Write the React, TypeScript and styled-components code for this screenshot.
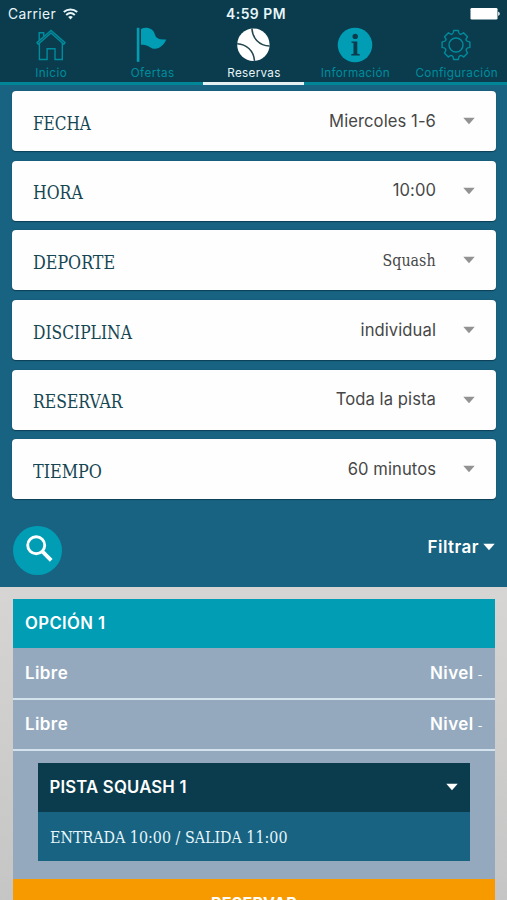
import React from "react";
import styled, { createGlobalStyle } from "styled-components";

const GlobalStyle = createGlobalStyle`
  * { box-sizing: border-box; }
  html, body { margin: 0; height: 900px; overflow: hidden; }
  body { font-family: Inter, "Liberation Sans", sans-serif; }
`;

const Screen = styled.div`
  width: 507px;
  height: 900px;
  overflow: hidden;
  display: flex;
  flex-direction: column;
  background: #d4d4d4;
`;

const Header = styled.header`
  flex: none;
  height: 85.4px;
  background: #0a3c4d;
`;

const StatusBar = styled.div`
  height: 27px;
  display: grid;
  grid-template-columns: 1fr auto 1fr;
  align-items: center;
  padding: 0 6px 0 8px;
  color: #e8f6fa;
`;

const Carrier = styled.div`
  display: flex;
  align-items: center;
  gap: 7px;
  font-size: 13.8px;
  letter-spacing: 0.4px;
`;

const Clock = styled.div`
  font-size: 13.9px;
  font-weight: 600;
  letter-spacing: 0.5px;
  padding-left: 3px;
`;

const Battery = styled.svg`
  justify-self: end;
  display: block;
`;

const Tabs = styled.nav`
  display: grid;
  grid-template-columns: repeat(5, 101.4px);
  height: 58.4px;
`;

const Tab = styled.a<{ $active?: boolean }>`
  display: flex;
  flex-direction: column;
  align-items: center;
  color: ${(p) => (p.$active ? "#e6f4f7" : "#008c9d")};
  border-bottom: 3px solid ${(p) => (p.$active ? "#e6f1f3" : "#008696")};
  svg { display: block; flex: none; }
`;

const TabLabel = styled.span<{ $spacing?: number }>`
  margin-top: 2px;
  padding-left: 1px;
  font-size: 11.7px;
  line-height: 16px;
  letter-spacing: ${(p) => p.$spacing ?? 0.3}px;
  white-space: nowrap;
`;

const SearchPanel = styled.section`
  flex: none;
  height: 502px;
  padding: 5.9px 11px 0 12px;
  background: #186381;
`;

const Fields = styled.div`
  display: grid;
  grid-auto-rows: 60px;
  row-gap: 9.6px;
`;

const Field = styled.div`
  display: flex;
  align-items: center;
  padding: 0 21px;
  border-radius: 4px;
  background: #fefefe;
  box-shadow: 0 0.5px 1px rgba(5, 45, 65, 0.65);
`;

const FieldLabel = styled.span<{ $fit: number }>`
  flex: 1;
  padding-top: 5px;
  color: #164653;
  font: 18.8px/24px "DejaVu Serif Condensed", "DejaVu Serif", serif;
  font-stretch: condensed;
  transform: scaleX(${(p) => p.$fit});
  transform-origin: left;
`;

const FieldValue = styled.span<{ $serif?: boolean }>`
  margin-right: 27px;
  padding-bottom: ${(p) => (p.$serif ? 0 : 1)}px;
  color: #474747;
  font-family: ${(p) => (p.$serif ? '"DejaVu Serif", serif' : 'Inter, sans-serif')};
  font-size: ${(p) => (p.$serif ? 16 : 16.6)}px;
  letter-spacing: ${(p) => (p.$serif ? 0 : 0.08)}px;
  transform: ${(p) => (p.$serif ? "scaleX(0.89)" : "none")};
  transform-origin: right;
`;

const Actions = styled.div`
  display: flex;
  justify-content: space-between;
  padding: 27px 1px 0 1px;
`;

const SearchButton = styled.button`
  width: 49px;
  height: 49px;
  padding: 0;
  border: 0;
  border-radius: 50%;
  background: #009db5;
  svg { display: block; }
`;

const Filter = styled.div`
  display: flex;
  align-items: center;
  gap: 4px;
  height: 42px;
  color: #fff;
  font-size: 17px;
  font-weight: 600;
  letter-spacing: 0.45px;
`;

const Results = styled.main`
  flex: 1;
  padding: 11.8px 12px 0 13px;
  background: linear-gradient(#d6d5d3, #c4c4c4);
`;

const Option = styled.section`
  display: flex;
  flex-direction: column;
  background: #94a9bd;
  color: #fff;
`;

const Title = styled.h2<{ $dark?: boolean }>`
  display: flex;
  align-items: center;
  justify-content: space-between;
  height: 49px;
  margin: 0;
  padding: 0 12px 1px;
  background: ${(p) => (p.$dark ? "#0a3c4d" : "#009db5")};
  font-size: 16.7px;
  font-weight: 600;
  letter-spacing: ${(p) => (p.$dark ? 0.2 : 0.4)}px;
`;

const PlayerRow = styled.div`
  display: flex;
  justify-content: space-between;
  align-items: center;
  height: 51.4px;
  padding: 0 12px;
  border-bottom: 2px solid #d3e2ec;
  font-size: 17px;
  font-weight: 600;
  letter-spacing: 0.4px;
`;

const Dash = styled.span`
  font-size: 11px;
  font-weight: 400;
  margin-left: 4px;
`;

const Court = styled.section`
  margin: 12px 25px 18px 24.5px;
  background: #186381;
`;

const Schedule = styled.div`
  height: 49px;
  padding: 0 12.5px;
  color: #e5f6fc;
  font: 16.4px/51px "DejaVu Serif Condensed", "DejaVu Serif", serif;
  font-stretch: condensed;
  white-space: nowrap;
  transform: scaleX(0.968);
  transform-origin: left;
`;

const ReserveButton = styled.button`
  height: 50px;
  padding: 0;
  border: 0;
  background: #f69a00;
  color: #fff;
  font: 700 16px/49px Inter, sans-serif;
  letter-spacing: 0.3px;
`;

const Caret = ({ color = "#fff" }: { color?: string }) => (
  <svg width="12" height="8" viewBox="0 0 12 8">
    <path d="M.3.7h11.4L6 7.3z" fill={color} />
  </svg>
);

const HomeIcon = () => (
  <svg width="36" height="36" viewBox="0 0 36 36" fill="none" stroke="currentColor" strokeWidth="1.4">
    <path d="M6.4 16v16.5h7.7V21.8H22v10.7h7.3V16" />
    <path d="M4 15.6 18 3.5l14 12.1-1.2 1.7L18 6 5.2 17.3z" />
    <path d="M6.2 13.2V5.7h4.5v3.4" />
  </svg>
);

const FlagIcon = () => (
  <svg width="36" height="36" viewBox="0 0 36 36" fill="#009db5">
    <path d="M2.8.8h2.6v34H2.8z" />
    <path d="M7 2c3.6-1.7 7.3-1.6 10.7.5 3.3 2.1 2.6 6.5 5.7 8.6 2.4 1.7 5.5 1.5 8.8 1.3-1.8 4.6-6.1 9.2-11.2 9.3-5.2 0-7-5-14-3.9z" />
  </svg>
);

const BallIcon = () => (
  <svg width="36" height="36" viewBox="0 0 36 36" fill="none">
    <circle cx="18.4" cy="17.7" r="16.2" fill="#fff" />
    <g stroke="#23454d" strokeWidth="1.5">
      <path d="M2.2 16.8C11 17.3 18.8 23 19.5 33.9M16.9 1.6C17.5 11 24 18.7 34.6 19" />
    </g>
  </svg>
);

const InfoIcon = () => (
  <svg width="36" height="36" viewBox="0 0 36 36">
    <circle cx="18" cy="18" r="17.3" fill="#009db5" />
    <circle cx="18.2" cy="9.4" r="2.7" fill="#0a3c4d" />
    <path d="M14.5 14.4h5.8v12.4l2.5.5v1.2h-8.6v-1.2l2.3-.5V16.1l-2-.4z" fill="#0a3c4d" />
  </svg>
);

const GearIcon = () => (
  <svg width="36" height="36" viewBox="0 0 36 36" fill="none" stroke="currentColor" strokeWidth="1.4">
    <circle cx="18" cy="18" r="7" />
    <path d="M15.7 3.5h4.6c.3 4 2.2 4.8 5.2 2.3l4 4c-2.5 3-2 4.6 2.4 5.1v5.5c-4.1.6-4.9 2.5-2.3 5.6l-3.9 3.9c-3-2.5-4.9-1.8-5.4 2.6h-4.6c-.5-4.4-2.4-5.1-5.4-2.6L6.4 26c2.6-3.1 1.8-5-2.3-5.6v-5.5c4.4-.5 4.9-2.1 2.4-5.1l4-4c3 2.5 4.9 1.7 5.2-2.3Z" strokeLinejoin="round" />
  </svg>
);

const tabs = [
  { name: "Inicio", icon: <HomeIcon />, spacing: 0.45 },
  { name: "Ofertas", icon: <FlagIcon />, spacing: 0.4 },
  { name: "Reservas", icon: <BallIcon />, spacing: 0.3, active: true },
  { name: "Información", icon: <InfoIcon />, spacing: 0.3 },
  { name: "Configuración", icon: <GearIcon />, spacing: 0.35 },
];

const fields = [
  { label: "FECHA", value: "Miercoles 1-6", fit: 0.906 },
  { label: "HORA", value: "10:00", fit: 0.93 },
  { label: "DEPORTE", value: "Squash", fit: 0.942, serif: true },
  { label: "DISCIPLINA", value: "individual", fit: 0.918 },
  { label: "RESERVAR", value: "Toda la pista", fit: 0.925 },
  { label: "TIEMPO", value: "60 minutos", fit: 0.947 },
];

export default function App() {
  return (
    <>
      <GlobalStyle />
      <Screen>
        <Header>
          <StatusBar>
            <Carrier>
              Carrier
              <svg width="15" height="12" viewBox="0 0 15 12" fill="none" stroke="#e8f6fa" strokeWidth="2">
                <path d="M.8 4.1c3.9-3.6 9.5-3.6 13.4 0M3.2 6.9c2.6-2.2 6-2.2 8.6 0" />
                <path d="m7.5 11.4-2.3-2.5c1.3-1.2 3.3-1.2 4.6 0z" fill="#e8f6fa" stroke="none" />
              </svg>
            </Carrier>
            <Clock>4:59 PM</Clock>
            <Battery width="31" height="12" viewBox="0 0 31 12" fill="#fff">
              <rect x="0.5" y="0" width="27" height="11.5" rx="1.3" />
              <path d="M28.2 3.8c2 .5 2 3.5 0 4z" />
            </Battery>
          </StatusBar>
          <Tabs>
            {tabs.map((t) => (
              <Tab key={t.name} $active={t.active}>
                {t.icon}
                <TabLabel $spacing={t.spacing}>{t.name}</TabLabel>
              </Tab>
            ))}
          </Tabs>
        </Header>
        <SearchPanel>
          <Fields>
            {fields.map((f) => (
              <Field key={f.label}>
                <FieldLabel $fit={f.fit}>{f.label}</FieldLabel>
                <FieldValue $serif={f.serif}>{f.value}</FieldValue>
                <Caret color="#929292" />
              </Field>
            ))}
          </Fields>
          <Actions>
            <SearchButton aria-label="Buscar">
              <svg width="49" height="49" viewBox="0 0 49 49" fill="none" stroke="#fff" strokeWidth="2.9">
                <circle cx="23.2" cy="19.3" r="8.5" />
                <path d="m29.3 25.4 8.9 8.9" strokeWidth="3.8" />
              </svg>
            </SearchButton>
            <Filter>Filtrar <Caret /></Filter>
          </Actions>
        </SearchPanel>
        <Results>
          <Option>
            <Title>OPCIÓN 1</Title>
            {[1, 2].map((n) => (
              <PlayerRow key={n}>
                <span>Libre</span>
                <span>Nivel<Dash>-</Dash></span>
              </PlayerRow>
            ))}
            <Court>
              <Title $dark>PISTA SQUASH 1 <Caret /></Title>
              <Schedule>ENTRADA 10:00 / SALIDA 11:00</Schedule>
            </Court>
            <ReserveButton>RESERVAR</ReserveButton>
          </Option>
        </Results>
      </Screen>
    </>
  );
}
